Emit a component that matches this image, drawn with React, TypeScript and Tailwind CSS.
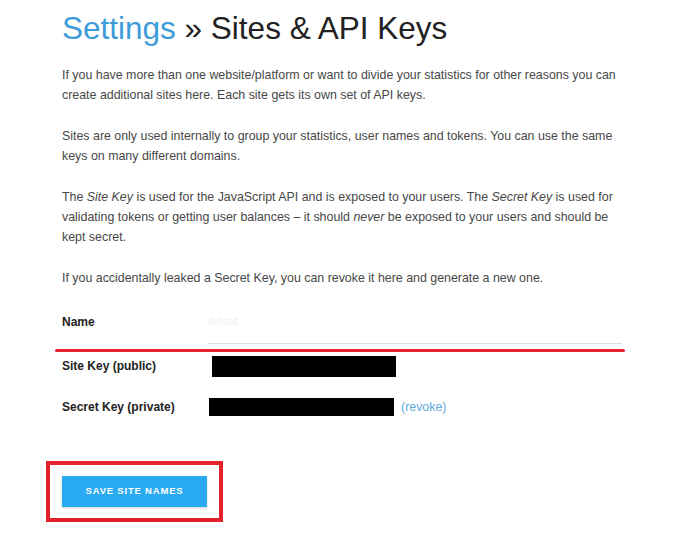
import React, { useState } from 'react';

const PARAGRAPHS: React.ReactNode[] = [
  'If you have more than one website/platform or want to divide your statistics for other reasons you can create additional sites here. Each site gets its own set of API keys.',
  'Sites are only used internally to group your statistics, user names and tokens. You can use the same keys on many different domains.',
  <>
    The <em>Site Key</em> is used for the JavaScript API and is exposed to your users. The <em>Secret Key</em> is used for
    validating tokens or getting user balances – it should <em>never</em> be exposed to your users and should be kept
    secret.
  </>,
  'If you accidentally leaked a Secret Key, you can revoke it here and generate a new one.',
];

export default function App() {
  const [siteName, setSiteName] = useState('default');

  return (
    <div className="min-h-[536px] w-[680px] bg-white pl-[62px] pt-[11px] font-['Liberation_Sans',Arial,sans-serif]">
      <h1 className="mb-[20px] text-[31.5px] leading-[34px] text-[#222]">
        <span className="text-[#3d9bd8]">Settings</span> » Sites &amp; API Keys
      </h1>

      <div className="w-[566px] text-[12.4px] leading-[20px] text-[#474747]">
        {PARAGRAPHS.map((p, i) => (
          <p key={i} className="mb-[21px] last:mb-0">
            {p}
          </p>
        ))}
      </div>

      {/* Form */}
      <div className="mt-[12px] w-[560px]">
        <div className="flex h-[44px] items-center">
          <label className="w-[146px] text-[12px] font-bold text-[#222]">Name</label>
          <input
            value={siteName}
            onChange={(e) => setSiteName(e.target.value)}
            className="h-full flex-1 border-b border-[#dedede] bg-transparent text-[10px] text-[#f0f0f0] outline-none"
          />
        </div>

        {/* red marker line */}
        <div className="ml-[-7px] mt-[5px] h-[3px] w-[570px] rounded-full bg-[#e3222b]" />

        <div className="flex h-[28px] items-center">
          <span className="w-[146px] text-[12px] font-bold text-[#222]">Site Key (public)</span>
          <div className="ml-[4px] h-[21px] w-[184px] bg-black" />
        </div>

        <div className="mt-[13px] flex h-[28px] items-center">
          <span className="w-[146px] text-[12px] font-bold text-[#222]">Secret Key (private)</span>
          <div className="ml-[1px] h-[18px] w-[185px] bg-black" />
          <a href="#" className="ml-[7px] text-[12.4px] text-[#63a8dc]">
            (revoke)
          </a>
        </div>
      </div>

      <div className="ml-[-16px] mt-[40px] inline-block border-4 border-[#e3222b] px-[12px] py-[11px]">
        <button className="flex h-[31px] w-[145px] items-center justify-center bg-[#2aaaf0] text-[9.5px] font-bold tracking-[0.8px] text-white shadow-[0_1px_2px_rgba(0,0,0,0.2)]">
          SAVE SITE NAMES
        </button>
      </div>
    </div>
  );
}
